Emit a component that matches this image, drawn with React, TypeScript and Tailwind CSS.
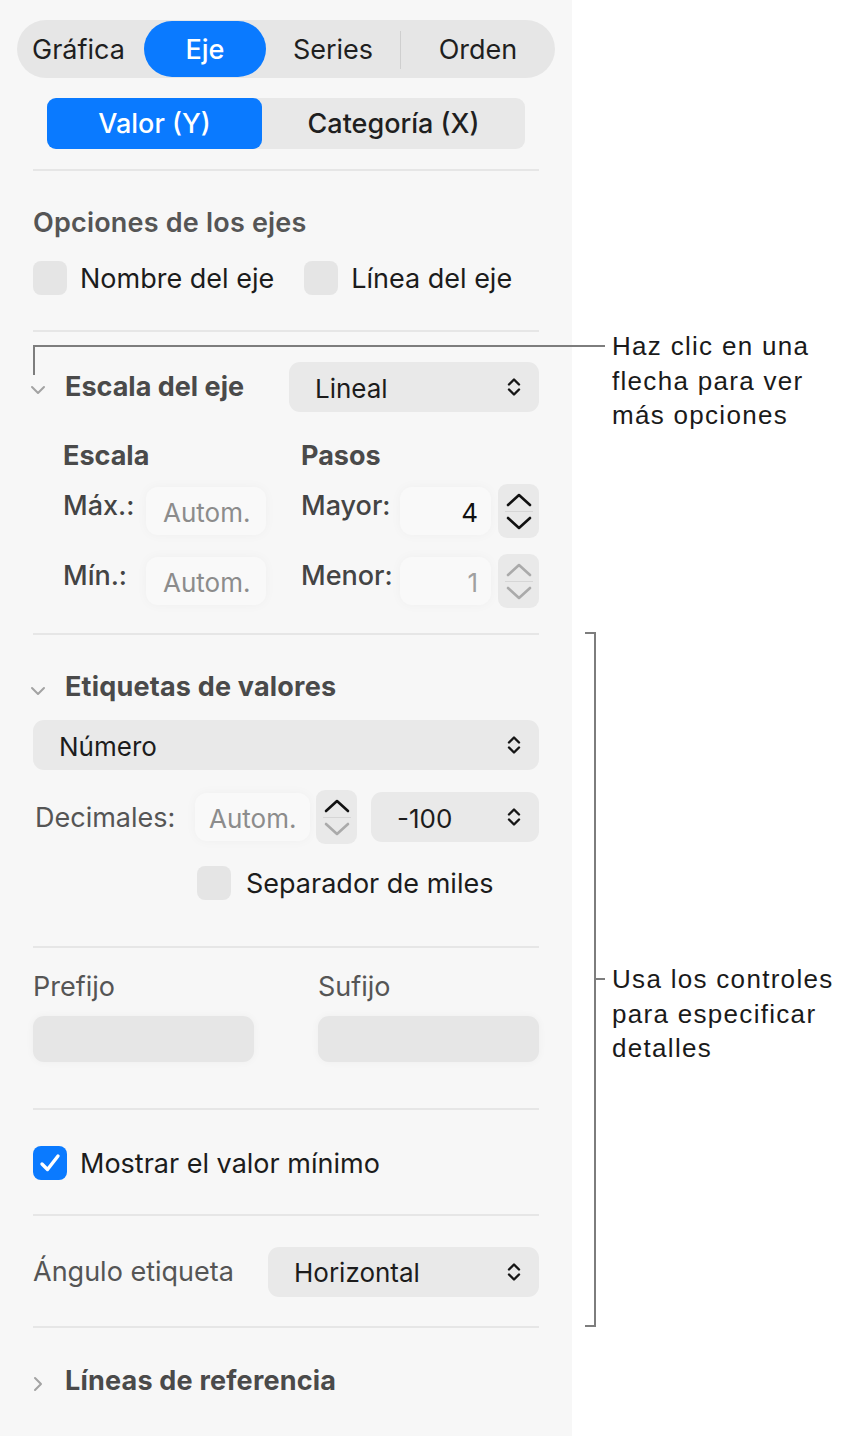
import React from 'react'

const ink = 'text-[#1c1c1c]'

function UpDown() {
  return (
    <svg width="16" height="20" viewBox="0 0 16 20" fill="none" stroke="#161616" strokeWidth="2.4" strokeLinecap="round" strokeLinejoin="round">
      <path d="M3 7.5 8 2.5 13 7.5" />
      <path d="M3 12.5 8 17.5 13 12.5" />
    </svg>
  )
}

function Disclosure({ open = true }: { open?: boolean }) {
  return open ? (
    <svg width="16" height="10" viewBox="0 0 16 10" fill="none" stroke="#a3a3a3" strokeWidth="2" strokeLinecap="round" strokeLinejoin="round">
      <path d="M2 2 8 8 14 2" />
    </svg>
  ) : (
    <svg width="10" height="16" viewBox="0 0 10 16" fill="none" stroke="#a3a3a3" strokeWidth="2" strokeLinecap="round" strokeLinejoin="round">
      <path d="M2 2 8 8 2 14" />
    </svg>
  )
}

function Stepper({ up = true, down = true }: { up?: boolean; down?: boolean }) {
  return (
    <div className="w-[41px] h-[54px] rounded-[9px] bg-[#e9e9e9] flex flex-col items-center justify-center shrink-0">
      <svg width="28" height="16" viewBox="0 0 28 16" fill="none" stroke={up ? '#111111' : '#aaaaaa'} strokeWidth="2.6" strokeLinecap="round" strokeLinejoin="round">
        <path d="M3 13 14 3 25 13" />
      </svg>
      <div className="w-[28px] h-px bg-[#d6d6d6] my-[3px]" />
      <svg width="28" height="16" viewBox="0 0 28 16" fill="none" stroke={down ? '#111111' : '#aaaaaa'} strokeWidth="2.6" strokeLinecap="round" strokeLinejoin="round">
        <path d="M3 3 14 13 25 3" />
      </svg>
    </div>
  )
}

function Field({ w, children, right }: { w: string; children?: React.ReactNode; right?: boolean }) {
  return (
    <div className={`${w} h-[48px] rounded-[12px] bg-[#f9f9f9] shadow-[0_0_12px_rgba(0,0,0,0.035)] flex items-center pt-[3px] ${right ? 'justify-end pr-[13px]' : 'pl-[17px]'} shrink-0`}>
      {children}
    </div>
  )
}

function Popup({ w, label, pl = 'pl-[26px]' }: { w: string; label: string; pl?: string }) {
  return (
    <div className={`${w} h-[50px] rounded-[11px] bg-[#e9e9e9] flex items-center justify-between ${pl} pr-[17px] shrink-0`}>
      <span className={`text-[26px] pt-[2px] ${ink}`}>{label}</span>
      <UpDown />
    </div>
  )
}

function Check({ checked = false }: { checked?: boolean }) {
  return checked ? (
    <div className="w-[34px] h-[34px] rounded-[8px] bg-[#0a7aff] flex items-center justify-center shrink-0">
      <svg width="22" height="20" viewBox="0 0 22 20" fill="none" stroke="#ffffff" strokeWidth="3.4" strokeLinecap="round" strokeLinejoin="round">
        <path d="M3 11 8.5 16.5 19 3" />
      </svg>
    </div>
  ) : (
    <div className="w-[34px] h-[34px] rounded-[8px] bg-[#e5e5e5] shrink-0" />
  )
}

function Divider({ mt }: { mt: string }) {
  return <div className={`${mt} h-[2px] bg-[#e6e6e6] mx-[33px]`} />
}

export default function App() {
  return (
    <div className="relative w-[854px] min-h-[1436px] bg-white flex" style={{ fontFamily: 'Inter, "Noto Sans", sans-serif' }}>
      {/* inspector panel */}
      <div className="w-[572px] h-[1436px] bg-[#f7f7f7] flex flex-col pt-[20px]">
        {/* main tabs */}
        <div className="mx-[17px] h-[58px] rounded-full bg-[#e6e6e6] flex items-center text-[27px] text-[#1f1f1f] pt-[2px]">
          <div className="w-[127px] h-full flex items-center pl-[15px]">Gráfica</div>
          <div className="w-[122px] h-full -mt-[2px] rounded-full bg-[#0a7aff] text-white flex items-center justify-center pt-[2px] font-medium">Eje</div>
          <div className="w-[134px] h-full flex items-center justify-center">Series</div>
          <div className="w-px h-[38px] bg-[#cfcfcf]" />
          <div className="flex-1 h-full flex items-center justify-center">Orden</div>
        </div>

        {/* axis switch */}
        <div className="mt-[20px] mx-[47px] h-[51px] rounded-[9px] bg-[#e8e8e8] flex text-[27px] font-medium">
          <div className="w-[215px] h-full rounded-[9px] bg-[#0a7aff] text-white flex items-center justify-center pt-[2px]">Valor (Y)</div>
          <div className="flex-1 flex items-center justify-center pt-[2px] text-[#1f1f1f]">Categoría (X)</div>
        </div>

        <Divider mt="mt-[20px]" />

        {/* axis options */}
        <div className="mt-[34px] px-[33px] h-[36px] flex items-center text-[27px] font-semibold tracking-[0.2px] text-[#555555]">Opciones de los ejes</div>
        <div className="mt-[20px] px-[33px] h-[34px] flex items-center text-[27px]">
          <Check />
          <span className={`ml-[13px] pt-[3px] ${ink}`}>Nombre del eje</span>
          <div className="ml-[30px]"><Check /></div>
          <span className={`ml-[13px] pt-[3px] ${ink}`}>Línea del eje</span>
        </div>

        <Divider mt="mt-[35px]" />

        {/* axis scale */}
        <div className="mt-[30px] pl-[30px] pr-[33px] h-[50px] flex items-center">
          <div className="w-[35px] flex items-center pt-[6px]"><Disclosure /></div>
          <span className="text-[27px] font-bold text-[#4a4a4a]">Escala del eje</span>
          <div className="ml-auto"><Popup w="w-[250px]" label="Lineal" /></div>
        </div>

        <div className="mt-[29px] pl-[63px] h-[30px] flex items-center text-[27px] font-bold text-[#4a4a4a]">
          <span className="w-[238px]">Escala</span>
          <span>Pasos</span>
        </div>

        <div className="mt-[13px] pl-[63px] pr-[33px] h-[54px] flex items-center text-[27px]">
          <span className="w-[83px] pb-[10px] font-medium text-[#444444]">Máx.:</span>
          <Field w="w-[120px]"><span className="text-[26px] text-[#8c8c8c]">Autom.</span></Field>
          <span className="ml-[35px] w-[99px] pb-[10px] font-medium text-[#444444]">Mayor:</span>
          <Field w="w-[91px]" right><span className="text-[26px] text-[#111111]">4</span></Field>
          <div className="ml-auto"><Stepper /></div>
        </div>

        <div className="mt-[16px] pl-[63px] pr-[33px] h-[54px] flex items-center text-[27px]">
          <span className="w-[83px] pb-[10px] font-medium text-[#444444]">Mín.:</span>
          <Field w="w-[120px]"><span className="text-[26px] text-[#8c8c8c]">Autom.</span></Field>
          <span className="ml-[35px] w-[99px] pb-[10px] font-medium text-[#444444]">Menor:</span>
          <Field w="w-[91px]" right><span className="text-[26px] text-[#a0a0a0]">1</span></Field>
          <div className="ml-auto"><Stepper up={false} down={false} /></div>
        </div>

        <Divider mt="mt-[25px]" />

        {/* value labels */}
        <div className="mt-[37px] pl-[30px] h-[30px] flex items-center">
          <div className="w-[35px] flex items-center pt-[8px]"><Disclosure /></div>
          <span className="text-[27px] font-bold tracking-[0.2px] text-[#4a4a4a]">Etiquetas de valores</span>
        </div>

        <div className="mt-[18px] px-[33px]">
          <Popup w="w-full" label="Número" pl="pl-[26px]" />
        </div>

        <div className="mt-[20px] pl-[35px] pr-[33px] h-[54px] flex items-center text-[27px]">
          <span className="w-[160px] pt-[2px] text-[#555555]">Decimales:</span>
          <Field w="w-[115px]" ><span className="text-[26px] text-[#8c8c8c] -ml-[3px]">Autom.</span></Field>
          <div className="ml-[6px]"><Stepper down={false} /></div>
          <div className="ml-auto"><Popup w="w-[168px]" label="-100" /></div>
        </div>

        <div className="mt-[22px] pl-[197px] h-[34px] flex items-center text-[27px]">
          <Check />
          <span className={`ml-[15px] pt-[2px] ${ink}`}>Separador de miles</span>
        </div>

        <Divider mt="mt-[46px]" />

        {/* prefix / suffix */}
        <div className="mt-[24px] px-[33px] h-[30px] flex items-center text-[27px] text-[#555555]">
          <span className="w-[285px]">Prefijo</span>
          <span>Sufijo</span>
        </div>
        <div className="mt-[14px] px-[33px] flex justify-between">
          <div className="w-[221px] h-[46px] rounded-[11px] bg-[#e6e6e6] shadow-[0_0_8px_rgba(0,0,0,0.04)]" />
          <div className="w-[221px] h-[46px] rounded-[11px] bg-[#e6e6e6] shadow-[0_0_8px_rgba(0,0,0,0.04)]" />
        </div>

        <Divider mt="mt-[46px]" />

        <div className="mt-[36px] px-[33px] h-[34px] flex items-center text-[27px]">
          <Check checked />
          <span className={`ml-[13px] pt-[2px] ${ink}`}>Mostrar el valor mínimo</span>
        </div>

        <Divider mt="mt-[34px]" />

        <div className="mt-[30px] px-[33px] h-[51px] flex items-center text-[27px]">
          <span className="text-[#555555] pt-[2px]">Ángulo etiqueta</span>
          <div className="ml-auto"><Popup w="w-[271px]" label="Horizontal" /></div>
        </div>

        <Divider mt="mt-[29px]" />

        <div className="mt-[38px] pl-[33px] h-[30px] flex items-center">
          <div className="w-[32px] flex items-center pt-[6px]"><Disclosure open={false} /></div>
          <span className="text-[27px] font-bold tracking-[0.2px] text-[#4a4a4a]">Líneas de referencia</span>
        </div>
      </div>

      {/* callouts */}
      <div className="absolute left-[33px] top-[345px] w-[572px] h-[2px] bg-[#7d7d7d]" />
      <div className="absolute left-[33px] top-[345px] w-[2px] h-[30px] bg-[#7d7d7d]" />
      <div className="absolute left-[612px] top-[329px] text-[26px] leading-[34.5px] tracking-[1.3px] text-[#1a1a1a]" style={{ fontFamily: '"Liberation Sans", Arial, sans-serif' }}>
        Haz clic en una<br />flecha para ver<br />más opciones
      </div>

      <div className="absolute left-[585px] top-[632px] w-[11px] h-[2px] bg-[#7d7d7d]" />
      <div className="absolute left-[594px] top-[632px] w-[2px] h-[695px] bg-[#7d7d7d]" />
      <div className="absolute left-[585px] top-[1325px] w-[11px] h-[2px] bg-[#7d7d7d]" />
      <div className="absolute left-[594px] top-[978px] w-[11px] h-[2px] bg-[#7d7d7d]" />
      <div className="absolute left-[612px] top-[962px] text-[26px] leading-[34.5px] tracking-[1.3px] text-[#1a1a1a]" style={{ fontFamily: '"Liberation Sans", Arial, sans-serif' }}>
        Usa los controles<br />para especificar<br />detalles
      </div>
    </div>
  )
}
